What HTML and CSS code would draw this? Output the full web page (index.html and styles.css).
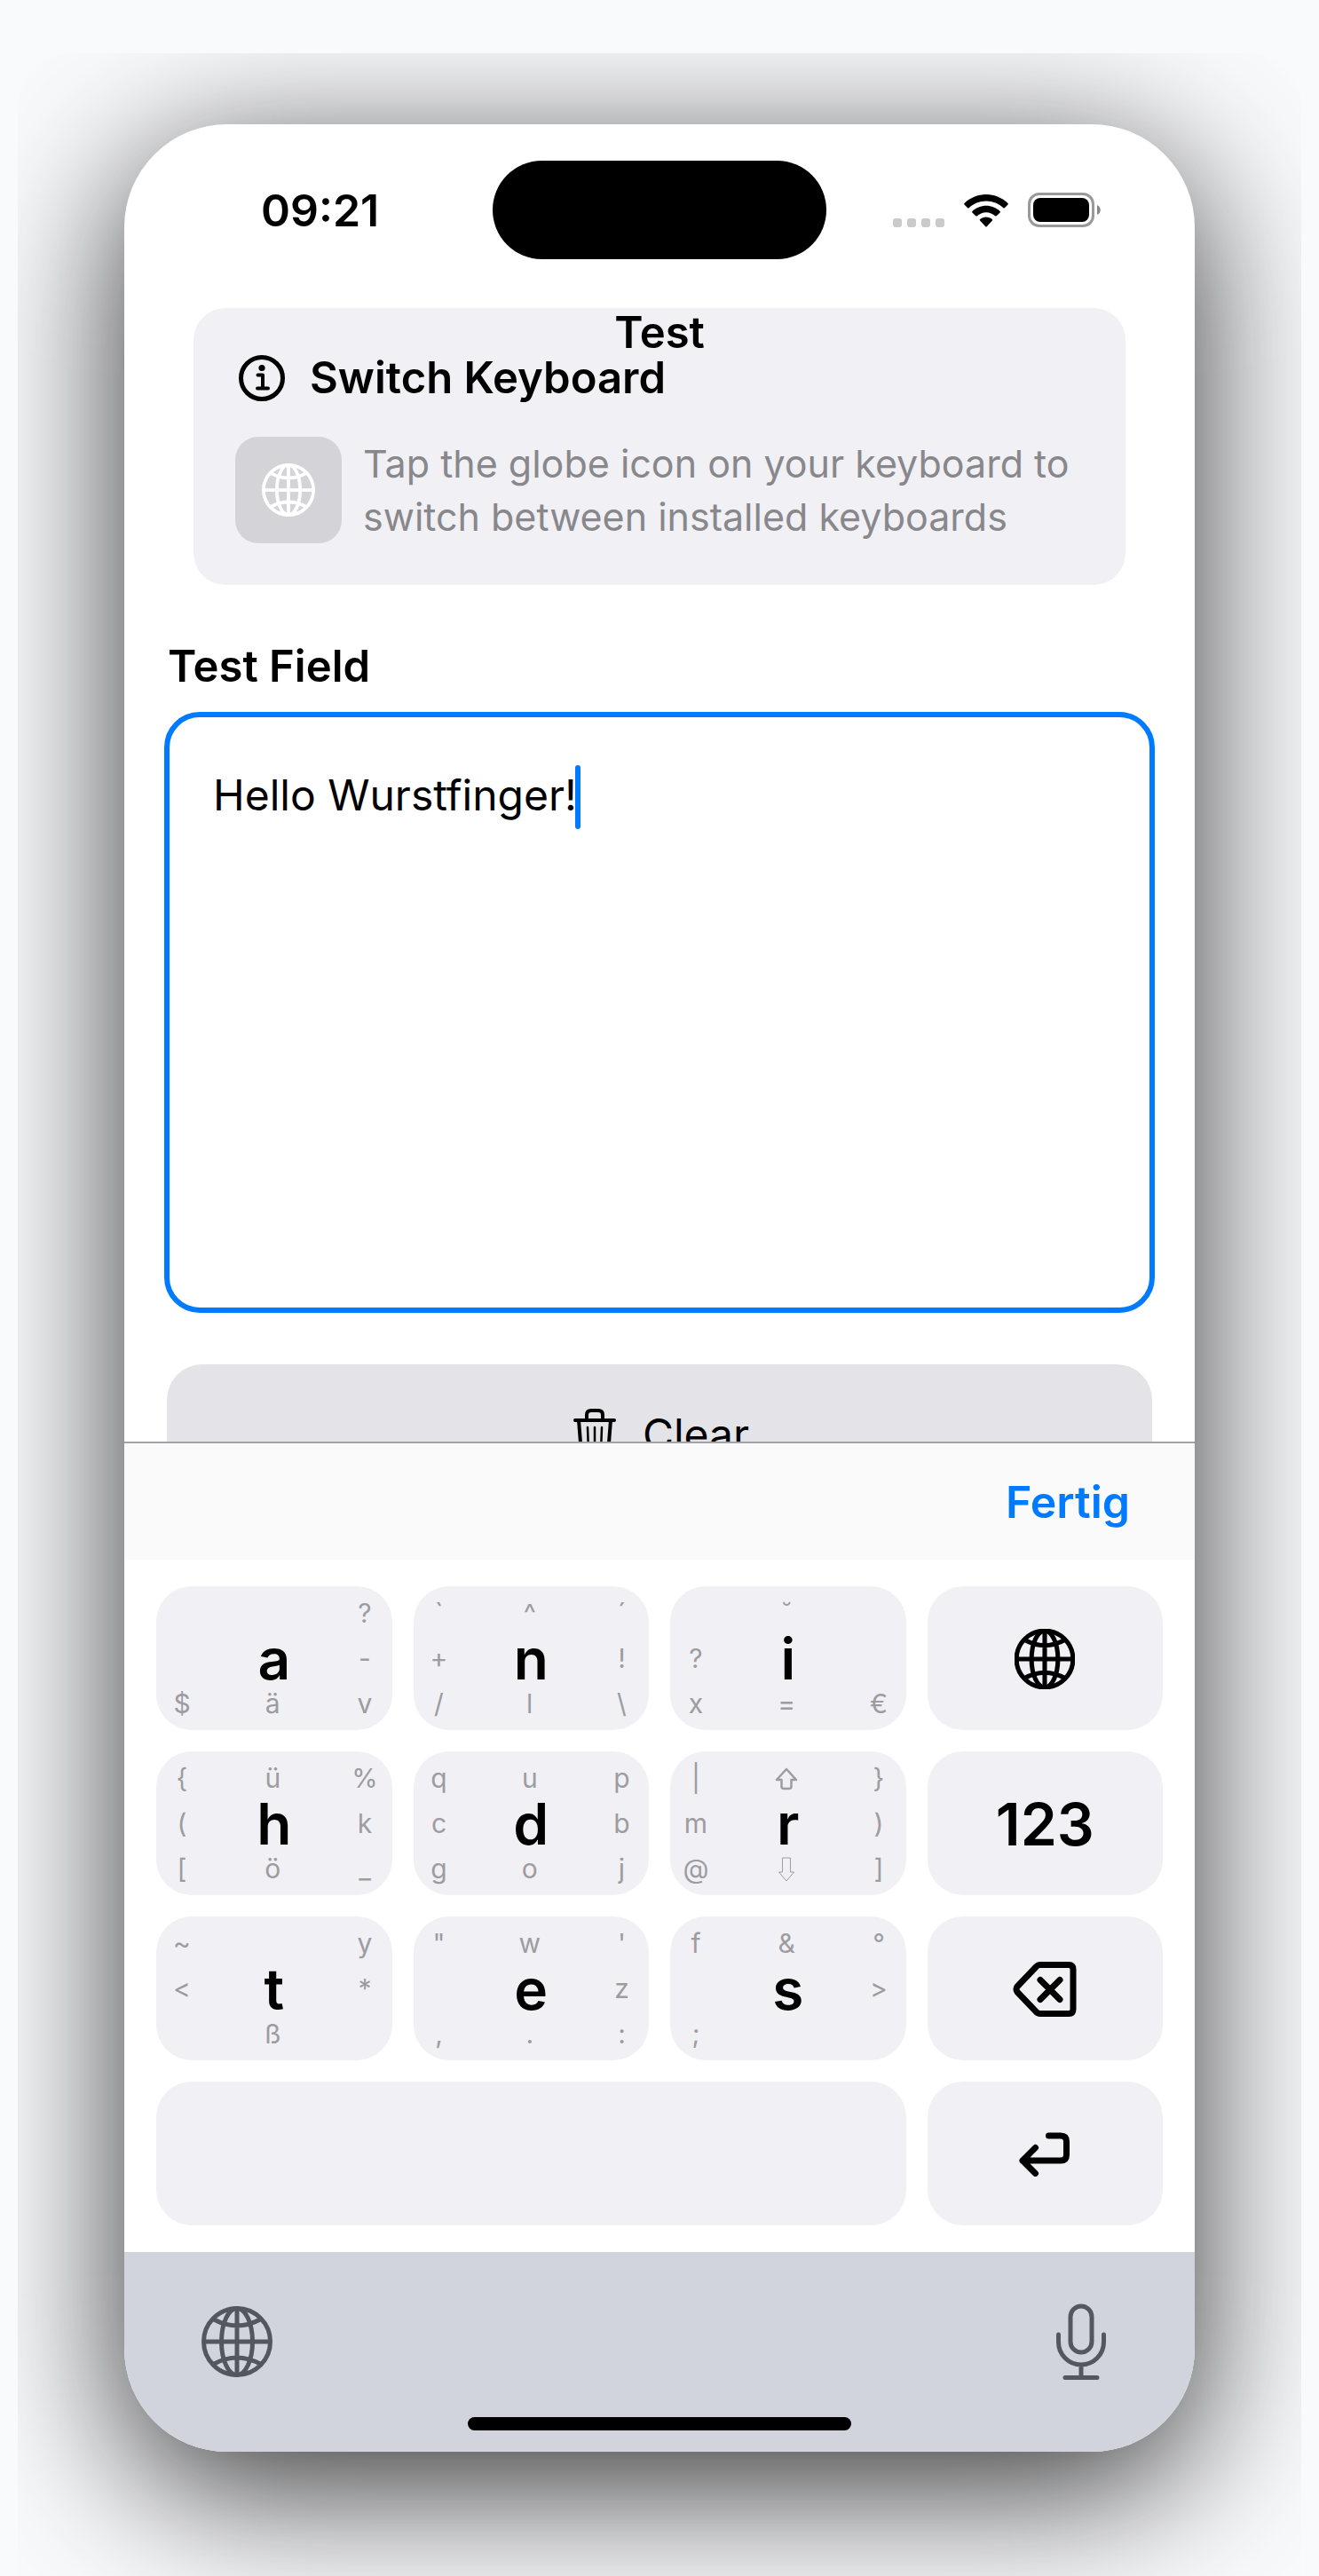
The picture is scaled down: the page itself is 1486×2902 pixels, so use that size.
FILE: index.html
```html
<!DOCTYPE html>
<html lang="en">
<head>
<meta charset="utf-8">
<meta name="viewport" content="width=device-width, initial-scale=1">
<title>Test</title>
<link rel="stylesheet" href="styles.css">
</head>
<body>
<svg class="defs" aria-hidden="true">
  <symbol id="globe" viewBox="0 0 80 80">
    <g fill="none" stroke="currentColor">
      <circle cx="40" cy="40" r="37.5"/>
      <ellipse cx="40" cy="40" rx="17.5" ry="37.5"/>
      <path d="M40 2.5v75M2.5 40h75M13 14.500Q40 29.500 67 14.500M13 65.500Q40 50.500 67 65.500"/>
    </g>
  </symbol>
</svg>
<main class="stage">
  <div class="phone">
    <header class="status">
      <time class="clock">09:21</time>
      <div class="island"></div>
      <div class="indicators">
        <svg width="58" height="40" viewBox="0 0 58 40" fill="#cacaca" aria-label="No signal"><rect y="29" width="10" height="10" rx="3"/><rect x="16" y="29" width="10" height="10" rx="3"/><rect x="32" y="29" width="10" height="10" rx="3"/><rect x="48" y="29" width="10" height="10" rx="3"/></svg>
        <svg width="50" height="40" viewBox="0 0 50 40" aria-label="Wi-Fi"><path d="M25 2C15.500 2 6.800 5.800.5 12.100q-.6.7 0 1.400l3.700 3.700q.7.6 1.400 0C10.600 12.600 17.500 9.600 25 9.600s14.400 3 19.400 7.600q.7.600 1.400 0l3.700-3.700q.6-.7 0-1.400C43.200 5.800 34.500 2 25 2z"/><path d="M25 14.800c-6 0-11.500 2.400-15.600 6.200q-.7.700 0 1.500l3.900 3.800q.7.600 1.400 0C17.400 24 21 22.300 25 22.300s7.600 1.700 10.300 4q.7.600 1.400 0l3.900-3.800q.7-.8 0-1.500C36.500 17.200 31 14.800 25 14.800z"/><path d="M25 27.400c-2.600 0-5 1-6.900 2.500q-.8.700 0 1.500l6.200 6.800q.7.700 1.400 0l6.200-6.800q.8-.8 0-1.500C30 28.400 27.600 27.400 25 27.400z"/></svg>
        <svg width="82" height="40" viewBox="0 0 82 40" aria-label="Battery full"><rect x="1.500" y="1.500" width="72" height="36" rx="11.500" fill="none" stroke="#999" stroke-width="3"/><rect x="6" y="6" width="63" height="27" rx="8"/><path d="M78 14c5 2 5 9 0 11z" fill="#888"/></svg>
      </div>
    </header>
    <h1 class="title">Test</h1>

    <section class="card">
      <h2 class="card-head">
        <svg width="60" height="60" viewBox="0 0 60 60" aria-hidden="true"><circle cx="30" cy="30" r="23.500" fill="none" stroke="#000" stroke-width="5"/><circle cx="30" cy="18.500" r="3.600"/><path d="M25.500 26.500H31V41M25 41.500h12" fill="none" stroke="#000" stroke-width="4" stroke-linecap="round" stroke-linejoin="round"/></svg>
        Switch Keyboard
      </h2>
      <div class="card-body">
        <span class="tile"><svg class="globe-small" aria-hidden="true"><use href="#globe"/></svg></span>
        <p class="hint">Tap the globe icon on your keyboard to switch between installed keyboards</p>
      </div>
    </section>

    <section class="field">
      <label class="field-label" for="test-field">Test Field</label>
      <div class="field-box">
        <textarea id="test-field" class="field-input" spellcheck="false">Hello Wurstfinger!</textarea>
        <span class="caret"></span>
      </div>
      <div class="actions">
        <button class="clear" type="button">
          <svg width="48" height="60" viewBox="0 0 48 60" aria-hidden="true"><g fill="none" stroke="#000" stroke-width="4" stroke-linecap="round" stroke-linejoin="round"><path d="M2 14h44M6 14l3 38q.5 5 5 5h20q4.500 0 5-5l3-38M15 13V8q0-5 5-5h8q5 0 5 5v5"/><path stroke-width="2.500" d="M16 22l1 27M24 22v27M32 22l-1 27"/></g></svg>
          Clear
        </button>
      </div>
    </section>

    <section class="keyboard">
      <div class="toolbar"><button class="done" type="button">Fertig</button></div>
      <div class="keys">
        <button class="key" type="button"><b>a</b><i></i><i></i><i>?</i><i></i><i></i><i>-</i><i>$</i><i>ä</i><i>v</i></button>
        <button class="key" type="button"><b>n</b><i>`</i><i>^</i><i>´</i><i>+</i><i></i><i>!</i><i>/</i><i>l</i><i>\</i></button>
        <button class="key" type="button"><b>i</b><i></i><i>˘</i><i></i><i>?</i><i></i><i></i><i>x</i><i>=</i><i>€</i></button>
        <button class="key wide-label" type="button" aria-label="Next keyboard"><svg class="globe-key"><use href="#globe"/></svg></button>

        <button class="key" type="button"><b>h</b><i>{</i><i>ü</i><i>%</i><i>(</i><i></i><i>k</i><i>[</i><i>ö</i><i>_</i></button>
        <button class="key" type="button"><b>d</b><i>q</i><i>u</i><i>p</i><i>c</i><i></i><i>b</i><i>g</i><i>o</i><i>j</i></button>
        <button class="key" type="button"><b>r</b><i>|</i><i><svg width="26" height="26" viewBox="0 0 26 26"><path d="M13 2L24 14H18.500V21.500q0 2.500-2.500 2.500h-6q-2.500 0-2.500-2.500V14H2z" fill="none" stroke="currentColor" stroke-width="2.500" stroke-linejoin="round"/></svg></i><i>}</i><i>m</i><i></i><i>)</i><i>@</i><i><svg width="20" height="28" viewBox="0 0 20 28"><path d="M5.500 1h9v16H18.500L10 27 1.500 17h4z" fill="none" stroke="currentColor"/></svg></i><i>]</i></button>
        <button class="key wide-label" type="button">123</button>

        <button class="key" type="button"><b>t</b><i>~</i><i></i><i>y</i><i>&lt;</i><i></i><i>*</i><i></i><i>ß</i><i></i></button>
        <button class="key" type="button"><b>e</b><i>"</i><i>w</i><i>'</i><i></i><i></i><i>z</i><i>,</i><i>.</i><i>:</i></button>
        <button class="key" type="button"><b>s</b><i>f</i><i>&amp;</i><i>°</i><i></i><i></i><i>&gt;</i><i>;</i><i></i><i></i></button>
        <button class="key wide-label" type="button" aria-label="Delete"><svg width="72" height="62" viewBox="0 0 72 62"><g fill="none" stroke="#000" stroke-width="7" stroke-linecap="round" stroke-linejoin="round"><path d="M31 3.500h32q5 0 5 5v45q0 5-5 5H31q-3 0-5-2.500L5 34q-2-3 0-6L26 6q2-2.500 5-2.500z"/><path d="M31 20.500l22 22M53 20.500l-22 22"/></g></svg></button>

        <button class="key space" type="button" aria-label="Space"></button>
        <button class="key wide-label" type="button" aria-label="Return"><svg width="58" height="50" viewBox="0 0 58 50"><path d="M33.500 4H47q6.500 0 6.500 6.500v15Q53.500 32 47 32H4M18.500 17.500L4 32l14.500 14.500" fill="none" stroke="#000" stroke-width="7" stroke-linecap="round" stroke-linejoin="round"/></svg></button>
      </div>
      <footer class="dock">
        <div class="dock-row">
          <button class="dock-button" type="button" aria-label="Switch keyboard"><svg class="globe-dock"><use href="#globe"/></svg></button>
          <button class="dock-button" type="button" aria-label="Dictate"><svg width="58" height="86" viewBox="0 0 58 86"><g fill="none" stroke="currentColor" stroke-width="5" stroke-linecap="round"><rect x="17" y="3" width="24" height="52" rx="12"/><path d="M3.500 35v8.500a25.500 25.500 0 0 0 51 0V35M29 69v15M11 83.500h36"/></g></svg></button>
        </div>
        <div class="home"></div>
      </footer>
    </section>
  </div>
</main>
</body>
</html>
```
FILE: styles.css
```css
* { box-sizing: border-box; }

body {
  margin: 0;
  background: #f9fafc;
  color: #000;
  font-family: Inter, "Liberation Sans", sans-serif;
  font-size: 48px;
  line-height: 60px;
}

h1, h2, p { margin: 0; font-size: inherit; }

button {
  border: 0;
  padding: 0;
  background: none;
  color: inherit;
  font: inherit;
  cursor: pointer;
}

svg { display: block; flex: none; }
.defs { display: none; }

.stage {
  margin: 60px 20px 0;
  padding: 80px 120px 140px;
  overflow: hidden;
  border-radius: 60px 60px 0 0;
}

.phone {
  position: relative;
  border-radius: 116px;
  background: #fff;
  box-shadow: 0 40px 170px rgba(0, 0, 0, 0.8);
}

/* status bar */
.status {
  display: grid;
  grid-template-columns: 1fr 376px 1fr;
  align-items: center;
  padding: 41px 0 55px;
}
.clock { padding-left: 154px; font-size: 50px; font-weight: 600; }
.island { height: 111px; border-radius: 56px; background: #000; }
.indicators {
  display: flex;
  justify-content: flex-end;
  gap: 22px;
  padding-right: 106px;
}

.title {
  position: absolute;
  top: 205px;
  left: 0;
  right: 0;
  text-align: center;
  font-size: 49px;
  font-weight: 600;
}

/* hint card */
.card {
  margin: 0 78px;
  padding: 49px 47px 47px;
  border-radius: 36px;
  background: #f1f0f5;
}
.card-head {
  display: flex;
  gap: 24px;
  font-size: 49px;
  font-weight: 600;
}
.card-body { display: flex; gap: 24px; margin-top: 36px; }
.tile {
  display: grid;
  place-items: center;
  flex: none;
  width: 120px;
  height: 120px;
  border-radius: 26px;
  background: #d4d4d8;
  color: #fff;
}
.globe-small { width: 60px; height: 60px; stroke-width: 5; }
.hint { color: #88888c; font-size: 43px; }

/* text field */
.field { padding: 62px 45px 0; }
.field-label { display: block; padding-left: 4px; font-size: 49px; font-weight: 600; }
.field-box { position: relative; margin-top: 21px; }
.field-input {
  display: block;
  width: 100%;
  height: 677px;
  padding: 58px 49px;
  border: 6px solid #007aff;
  border-radius: 40px;
  outline: 0;
  resize: none;
  background: #fff;
  color: #000;
  font: inherit;
}
.caret {
  position: absolute;
  top: 60px;
  left: 463px;
  width: 6px;
  height: 72px;
  border-radius: 3px;
  background: #007aff;
}
.actions { padding: 58px 3px 0; }
.clear {
  display: flex;
  align-items: center;
  justify-content: center;
  gap: 30px;
  width: 100%;
  padding: 49px 0 49px 4px;
  border-radius: 40px;
  background: #e4e4e8;
}

/* keyboard, sliding over the end of the form */
.keyboard { position: relative; margin-top: -71px; }
.toolbar {
  display: flex;
  justify-content: flex-end;
  align-items: center;
  height: 133px;
  padding: 0 73px;
  border-top: 2px solid #a3a3a7;
  background: #fafafb;
}
.done { color: #007aff; font-size: 50px; font-weight: 600; }

.keys {
  display: grid;
  grid-template-columns: repeat(4, 1fr);
  gap: 24px;
  padding: 30px 36px;
  background: #fff;
}
.key {
  display: grid;
  grid-template: repeat(3, 51px) / 58px 1fr 61px;
  min-height: 162px;
  padding: 5px 0 4px;
  border-radius: 40px;
  background: #f1f0f5;
}
.key b {
  grid-area: 1 / 1 / 4 / 4;
  align-self: center;
  font-size: 64px;
  font-weight: 600;
}
.key i {
  display: grid;
  place-items: center;
  color: #9c9ca1;
  font-size: 30px;
  font-style: normal;
  line-height: 51px;
}
.key i:nth-of-type(3n + 1) { grid-column: 1; }
.key i:nth-of-type(3n + 2) { grid-column: 2; }
.key i:nth-of-type(3n) { grid-column: 3; }
.key i:nth-of-type(-n + 3) { grid-row: 1; }
.key i:nth-of-type(n + 4):nth-of-type(-n + 6) { grid-row: 2; }
.key i:nth-of-type(n + 7) { grid-row: 3; }
.wide-label {
  display: flex;
  align-items: center;
  justify-content: center;
  font-size: 66px;
  font-weight: 600;
}
.space { grid-column: span 3; }
.globe-key { width: 68px; height: 68px; stroke-width: 6; }

/* system strip below the keyboard */
.dock {
  padding: 58px 87px 24px;
  border-radius: 0 0 116px 116px;
  background: #d1d4dc;
  color: #53575e;
}
.dock-row { display: flex; justify-content: space-between; align-items: center; }
.dock-button:last-child { margin-right: 12px; }
.globe-dock { width: 80px; height: 80px; stroke-width: 5; }
.home {
  width: 432px;
  height: 15px;
  margin: 42px auto 0;
  border-radius: 8px;
  background: #000;
}
```
